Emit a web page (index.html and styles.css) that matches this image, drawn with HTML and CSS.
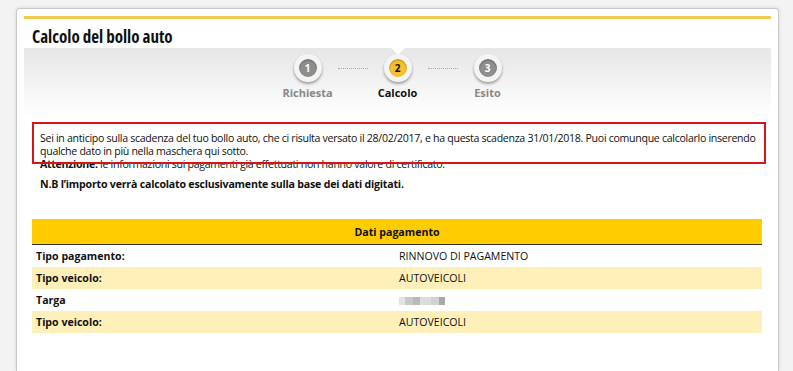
FILE: index.html
```html
<!DOCTYPE html>
<html lang="it">
<head>
  <meta charset="UTF-8" />
  <meta name="viewport" content="width=device-width, initial-scale=1" />
  <title>Calcolo del bollo auto</title>
  <link rel="stylesheet" href="styles.css">
</head>
<body>
  <div class="card">
    <div class="topline"></div>
    <h1 class="title">Calcolo del bollo auto</h1>

    <div class="steps">
      <div class="step">
        <span class="dot">1</span>
        <span class="label">Richiesta</span>
      </div>
      <span class="sep"></span>
      <div class="step active">
        <span class="dot">2</span>
        <span class="label">Calcolo</span>
      </div>
      <span class="sep"></span>
      <div class="step">
        <span class="dot">3</span>
        <span class="label">Esito</span>
      </div>
    </div>

    <div class="content">
      <div class="notice">
        <p>Sei in anticipo sulla scadenza del tuo bollo auto, che ci risulta versato il 28/02/2017, e ha questa scadenza 31/01/2018. Puoi comunque calcolarlo inserendo qualche dato in più nella maschera qui sotto.</p>
        <p><b>Attenzione:</b> le informazioni sui pagamenti già effettuati non hanno valore di certificato.</p>
        <div class="highlight"></div>
      </div>
      <p class="nb">N.B l’importo verrà calcolato esclusivamente sulla base dei dati digitati.</p>

      <table class="dati">
        <thead>
          <tr><th colspan="2">Dati pagamento</th></tr>
        </thead>
        <tbody>
          <tr><td>Tipo pagamento:</td><td>RINNOVO DI PAGAMENTO</td></tr>
          <tr><td>Tipo veicolo:</td><td>AUTOVEICOLI</td></tr>
          <tr><td>Targa</td><td><span class="blur"></span></td></tr>
          <tr><td>Tipo veicolo:</td><td>AUTOVEICOLI</td></tr>
        </tbody>
      </table>
    </div>
  </div>
</body>
</html>
```

FILE: styles.css
```css
body {
  margin: 0;
  background: #f3f3f3;
  font-family: "Open Sans", "Noto Sans", sans-serif;
  color: #111;
  overflow: hidden;
}
.card {
  box-sizing: border-box;
  margin: 8px 0 0 16px;
  width: 763px;
  height: 363px;
  background: #fff;
  border: 1px solid #c9c9c9;
  border-bottom: none;
  border-radius: 4px 4px 0 0;
  padding: 7px 7px 0;
  box-shadow: 0 0 4px rgba(0,0,0,0.12);
}
.topline {
  border-top: 3px solid #f0c850;
}
.title {
  margin: 0;
  padding: 6px 0 0 8px;
  height: 23px;
  font-family: "Open Sans", sans-serif;
  font-stretch: 75%;
  font-size: 17px;
  font-weight: 700;
}
.steps {
  position: relative;
  height: 68px;
  display: flex;
  justify-content: center;
  align-items: flex-start;
  padding-top: 6px;
  box-sizing: border-box;
  background: linear-gradient(#e6e6e6, #ffffff);
}
.steps::before {
  content: "";
  position: absolute;
  top: 0;
  left: 50%;
  margin-left: -7px;
  border-left: 7px solid transparent;
  border-right: 7px solid transparent;
  border-top: 7px solid #fff;
}
.step {
  width: 60px;
  display: flex;
  flex-direction: column;
  align-items: center;
  gap: 3px;
}
.dot {
  width: 18px;
  height: 18px;
  border-radius: 50%;
  background: #8e8e8e;
  color: #fff;
  font-size: 10px;
  font-weight: 700;
  line-height: 18px;
  text-align: center;
  border: 5px solid #f4f4f4;
  box-shadow: 0 2px 3px rgba(0,0,0,0.35), inset 0 1px 2px rgba(0,0,0,0.3);
}
.step.active .dot {
  background: #f5c02a;
  color: #111;
}
.label {
  font-size: 11px;
  font-weight: 700;
  color: #888;
}
.step.active .label {
  color: #111;
}
.sep {
  width: 30px;
  margin-top: 14px;
  border-top: 1px dotted #aaa;
}
.content {
  padding: 0 8px;
}
.notice {
  position: relative;
  padding: 16px 0 0 8px;
  font-size: 10.6px;
  line-height: 13px;
  letter-spacing: -0.3px;
}
.notice p {
  margin: 0;
}
.highlight {
  position: absolute;
  left: 0;
  top: 6px;
  width: 730px;
  height: 38px;
  border: 2px solid #d8141b;
}
.nb {
  margin: 6px 0 0 8px;
  font-size: 10.6px;
  font-weight: 700;
  letter-spacing: -0.2px;
}
.dati {
  width: 730px;
  margin-top: 28px;
  border-collapse: collapse;
  font-size: 10.6px;
}
.dati th {
  background: #ffcc00;
  height: 25px;
  padding: 0;
  font-weight: 700;
  border-bottom: 1px solid #333;
}
.dati td {
  height: 22px;
  padding: 0 4px;
  width: 50%;
}
.dati td:first-child {
  font-weight: 700;
}
.dati td + td {
  padding-left: 2px;
}
.dati tbody tr:nth-child(even) td {
  background: #fff0b9;
}
.blur {
  display: inline-block;
  width: 46px;
  height: 8px;
  vertical-align: middle;
  background: linear-gradient(90deg, #e2e2e2 0 14%, #c8c8c8 14% 30%, #b9b9b9 30% 46%, #dcdcdc 46% 70%, #d2d2d2 70% 86%, #a8a8a8 86%);
}
```
